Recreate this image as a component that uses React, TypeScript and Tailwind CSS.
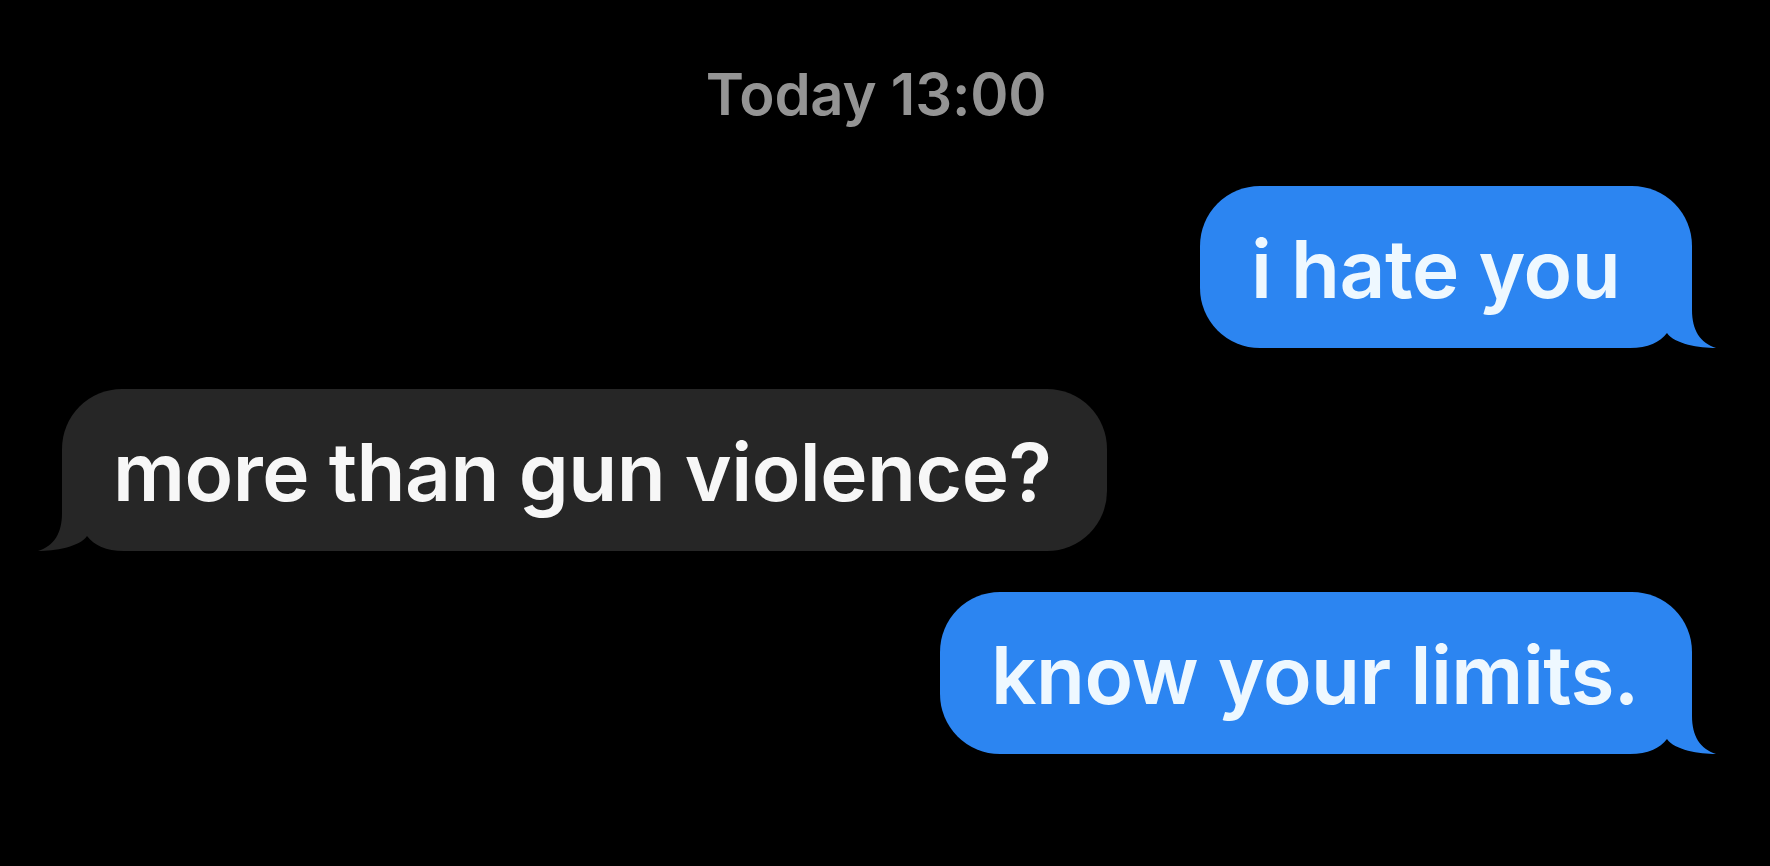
import React from "react";

const FONT = { fontFamily: "Inter, 'Noto Sans', 'Liberation Sans', sans-serif" };

// Bubble tail: covers the bottom corner of a bubble and sweeps out to a point,
// leaving a small pointed notch between the bubble's bottom edge and the tip.
function Tail({ color, side }: { color: string; side: "left" | "right" }) {
  return (
    <svg
      width="106"
      height="80"
      viewBox="0 0 106 80"
      className={
        side === "right"
          ? "absolute bottom-0 right-[-24px]"
          : "absolute bottom-0 left-[-24px] -scale-x-100"
      }
    >
      <path
        d="M0 0 H82 V42 C82 62 90 75 106 80 C90 80 64 76 57 65 C50 74 38 80 20 80 H0 Z"
        fill={color}
      />
    </svg>
  );
}

function Bubble({
  text,
  width,
  side,
}: {
  text: string;
  width: string;
  side: "left" | "right";
}) {
  const blue = side === "right";
  const color = blue ? "#2c85f1" : "#262626";
  return (
    <div
      className={`relative flex h-[162px] items-center rounded-[60px] pl-[51px] pt-[3px] ${width} ${
        blue
          ? "rounded-br-[80px] bg-[#2c85f1] text-[#eef8ff]"
          : "rounded-bl-[80px] bg-[#262626] text-[#f7f7f7]"
      }`}
    >
      <Tail color={color} side={side} />
      <span
        className="relative whitespace-nowrap text-[80px] font-semibold leading-[80px] tracking-[-0.5px]"
        style={FONT}
      >
        {text}
      </span>
    </div>
  );
}

export default function App() {
  return (
    <div className="flex h-[866px] w-[1770px] flex-col overflow-hidden bg-black">
      <div
        className="mt-[65px] flex h-[58px] justify-center pr-[18px] text-[58px] font-semibold leading-[58px] tracking-[-0.2px] text-[#949494]"
        style={FONT}
      >
        Today 13:00
      </div>

      <div className="mt-[63px] flex justify-end pr-[78px]">
        <Bubble text="i hate you" width="w-[492px]" side="right" />
      </div>

      <div className="mt-[41px] flex justify-start pl-[62px]">
        <Bubble text="more than gun violence?" width="w-[1045px]" side="left" />
      </div>

      <div className="mt-[41px] flex justify-end pr-[78px]">
        <Bubble text="know your limits." width="w-[752px]" side="right" />
      </div>
    </div>
  );
}
